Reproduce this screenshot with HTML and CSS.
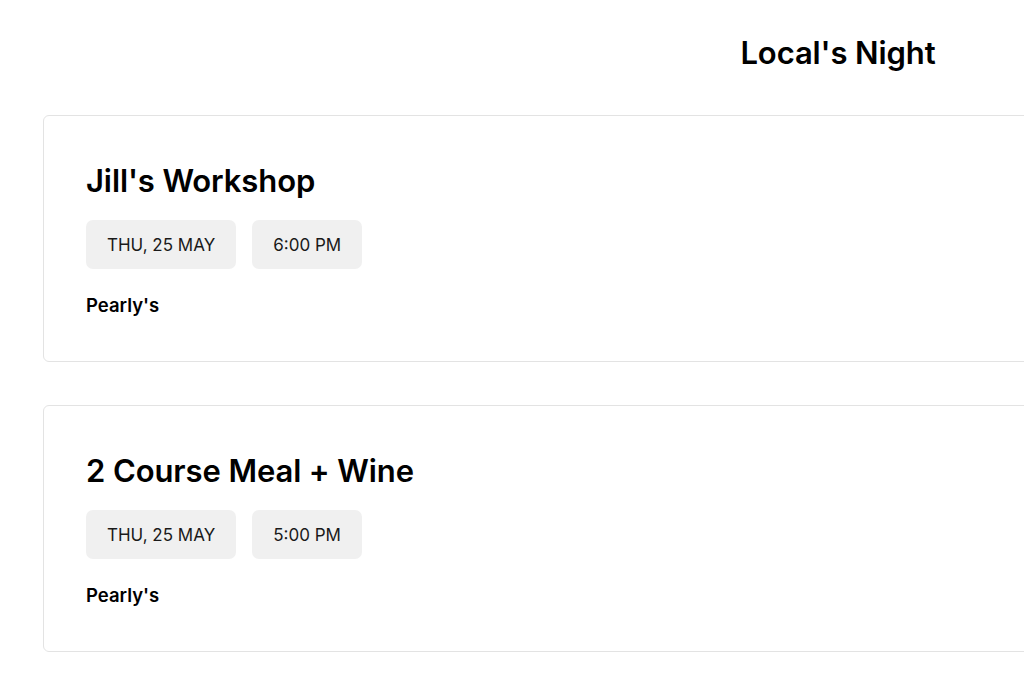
FILE: index.html
```html
<!DOCTYPE html>
<html lang="en">
<head>
<meta charset="utf-8">
<title>Local's Night</title>
<link rel="stylesheet" href="styles.css">
</head>
<body>
<div class="page">
  <header class="header">
    <h1 class="page-title">Local's Night</h1>
  </header>
  <main class="list">
    <article class="card">
      <h2 class="card-title">Jill's Workshop</h2>
      <div class="chips">
        <span class="chip">THU, 25 MAY</span>
        <span class="chip">6:00 PM</span>
      </div>
      <p class="venue">Pearly's</p>
    </article>
    <article class="card">
      <h2 class="card-title">2 Course Meal + Wine</h2>
      <div class="chips">
        <span class="chip">THU, 25 MAY</span>
        <span class="chip">5:00 PM</span>
      </div>
      <p class="venue">Pearly's</p>
    </article>
  </main>
</div>
</body>
</html>
```
FILE: styles.css
```css
html, body {
  margin: 0;
  padding: 0;
  background: #ffffff;
  overflow: hidden;
}
body {
  font-family: Inter, "Noto Sans", sans-serif;
  color: #000;
}
.page {
  width: 1590px;
  margin-left: 43px;
}
.header {
  display: flex;
  justify-content: center;
  padding-top: 35px;
  height: 115px;
  box-sizing: border-box;
}
.page-title {
  margin: 0;
  font-size: 31px;
  line-height: 36px;
  font-weight: 600;
  letter-spacing: -0.1px;
}
.list {
  display: flex;
  flex-direction: column;
  gap: 43px;
}
.card {
  border: 1px solid #e3e3e3;
  border-radius: 6px;
  padding: 47px 42px 40px;
  height: 247px;
  box-sizing: border-box;
}
.card-title {
  margin: 0;
  font-size: 31px;
  line-height: 36px;
  font-weight: 600;
  letter-spacing: -0.1px;
}
.chips {
  display: flex;
  gap: 16px;
  margin-top: 21px;
}
.chip {
  background: #f0f0f0;
  border-radius: 7px;
  height: 49px;
  padding: 0 21px;
  display: flex;
  align-items: center;
  font-size: 17px;
  color: #1a1a1a;
}
.venue {
  margin: 24px 0 0;
  font-size: 18.5px;
  line-height: 24px;
  font-weight: 600;
}
```
